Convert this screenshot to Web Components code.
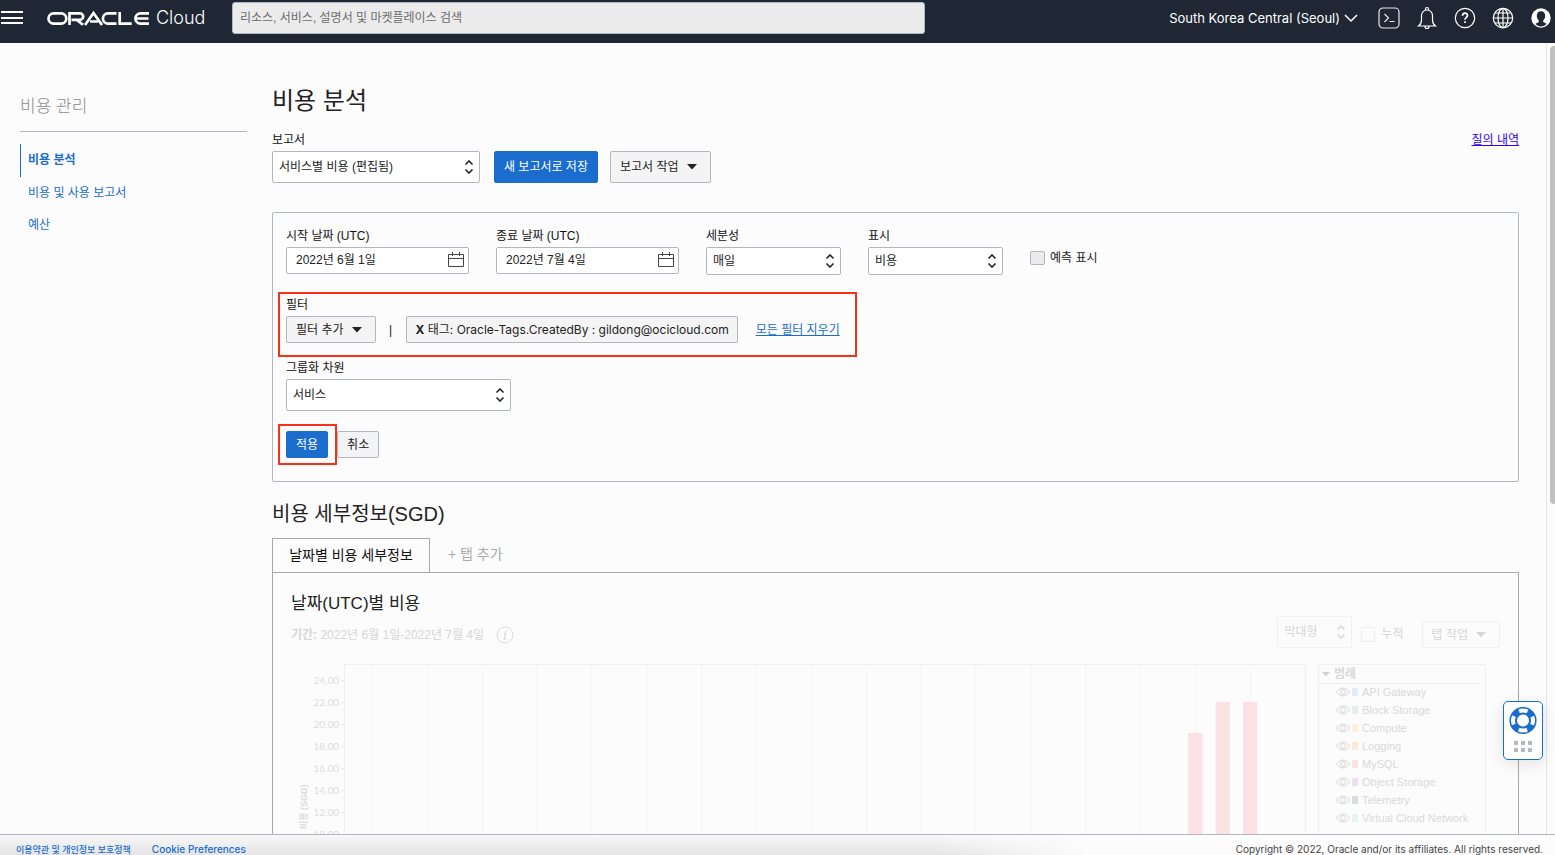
<!DOCTYPE html>
<html lang="ko">
<head>
<meta charset="utf-8">
<title>비용 분석 - Oracle Cloud</title>
<style>
html,body{margin:0;height:100%}
body{font-family:"Liberation Sans","Noto Sans CJK KR",sans-serif;font-size:12px;line-height:16px;color:#222;background:#fcfcfc;overflow:hidden}
</style>
</head>
<body>
<cost-app></cost-app>
<script>
const base = `*{box-sizing:border-box}button,input,select{font:inherit;color:inherit;margin:0}a{color:#1a6dcc;text-decoration:none}h1,h2,h3,p,ul{margin:0;padding:0;font-weight:400}ul{list-style:none}svg{display:block}`;
function define(name, html) {
  const t = document.createElement('template');
  customElements.define(name, class extends HTMLElement {
    constructor() {
      super();
      t.innerHTML = typeof html === 'function' ? html(this) : html;
      const root = this.attachShadow({ mode: 'open' });
      root.append(t.content.cloneNode(true));
      const s = document.createElement('style');
      s.textContent = base;
      root.prepend(s);
    }
  });
}

define('top-bar', `
<style>
:host{display:flex;align-items:flex-start;height:43px;flex:none;background:#1e2733;color:#fff}
.menu{border:0;background:none;padding:0;width:24px;height:36px}
.logo{display:flex;align-items:center;gap:6px;height:36px;margin-left:23px;color:#fff;font:300 18px/24px Inter,sans-serif;width:160px}
.search{margin:2px 0 0 25px;width:693px;height:32px;border:1px solid #b0b7c0;border-radius:3px;background:#ebebeb;padding:0 7px;color:#222;flex:0 1 693px}
.search::placeholder{color:#6b6b6b;opacity:1}
nav{margin-left:auto;display:flex;align-items:center;height:36px}
.region{display:flex;align-items:center;gap:4px;border:0;background:none;color:#fff;font:13px/16px Inter,sans-serif;padding:0;margin-right:19px;white-space:nowrap}
.icons{display:flex;gap:14px;margin-right:2px}
.icons button{border:0;background:none;padding:0;width:24px;height:24px}
</style>
<button class="menu" aria-label="메뉴"><svg width="24" height="36" stroke="#fff" stroke-width="2"><path d="M1 12h22M1 18h22M1 23h22"/></svg></button>
<a class="logo" href="#"><svg role="img" aria-label="Oracle" width="103" height="17" viewBox="0 0 103 17" fill="none" stroke="#fff" stroke-width="2.700">
<path d="M6.600 3.400h7.600a5.100 5.100 0 0 1 0 10.200H6.600a5.100 5.100 0 0 1 0-10.200z"/>
<path d="M22.500 15V3.400h10.500a3.200 3.200 0 0 1 0 6.400H24.500M29.500 9.800l6.500 5"/>
<path d="M38 15l8.500-12 8.500 12M43 11.500h8"/>
<path d="M69.500 3.400H61a5.100 5.100 0 0 0 0 10.200h8.500"/>
<path d="M72.700 2v11.600h12"/>
<path d="M102 3.400h-8.500a5.100 5.100 0 0 0 0 10.200h8.500M89 8.500h12.500"/></svg>Cloud</a>
<input class="search" type="search" aria-label="검색" placeholder="리소스, 서비스, 설명서 및 마켓플레이스 검색">
<nav>
<button class="region">South Korea Central (Seoul)<svg width="14" height="10" fill="none" stroke="#fff" stroke-width="1.500"><path d="M1 2l6 6 6-6"/></svg></button>
<div class="icons">
<button aria-label="Cloud Shell"><svg width="24" height="24" fill="none" stroke="#e8e8e8" stroke-width="1.200"><rect x="2" y="2" width="20" height="20" rx="4"/><path d="M7.500 8l4 4-4 4M12.500 15.500h5"/></svg></button>
<button aria-label="알림"><svg width="24" height="24" fill="none" stroke="#fff" stroke-width="1.200"><path d="M3.500 20c2-1.500 3-3 3-6V9.500a5.500 5.500 0 0 1 11 0V14c0 3 1 4.500 3 6zM10.500 4V3a1.500 1.500 0 0 1 3 0v1M10 20.500a2 2 0 0 0 4 0"/></svg></button>
<button aria-label="도움말"><svg width="24" height="24" fill="none" stroke="#fff" stroke-width="1.200"><circle cx="12" cy="12" r="9.700"/><path stroke-width="1.700" d="M9.500 9.800c0-3.400 5-3.400 5-.4 0 2-2.500 2-2.500 4.300M12 15.200v1.700"/></svg></button>
<button aria-label="언어"><svg width="24" height="24" fill="none" stroke="#fff" stroke-width="1.200"><circle cx="12" cy="12" r="9.700"/><ellipse cx="12" cy="12" rx="5" ry="9.700"/><path d="M12 2v20M2.300 12h19.400M4 7h16M4 17h16"/></svg></button>
<button aria-label="프로필"><svg width="24" height="24"><circle cx="12" cy="12" r="9.700" fill="#fff"/><path fill="#1e2733" d="M12 5.200c-2.800 0-4.200 2-4.200 4.500 0 2 .8 3.700 2 4.700v1.500l-3.300 1.800c2.500 3.700 8.500 3.700 11 0l-3.300-1.800v-1.500c1.200-1 2-2.700 2-4.700 0-2.500-1.400-4.500-4.200-4.500z"/></svg></button>
</div></nav>`);

define('side-nav', `
<style>
:host{display:block;width:227px;flex:none;padding-top:52px}
h2{font-size:17px;line-height:24px;color:#8a8a8a;font-weight:300;padding-bottom:12px;border-bottom:1px solid #b0b7c0;margin-bottom:12px}
a{display:block;line-height:32px;padding-left:8px}
a.on{font-weight:700;border-left:1px solid #1a6dcc;padding-left:7px;line-height:33px}
</style>
<h2>비용 관리</h2>
<ul><li><a class="on" href="#">비용 분석</a></li><li><a href="#">비용 및 사용 보고서</a></li><li><a href="#">예산</a></li></ul>`);

/* Labelled drop-down; width and height come from --w and --h. */
define('select-field', el => `
<style>
:host{display:flex;flex-direction:column;gap:var(--gap,3px)}
label{color:#111}
label.sr{display:none}
.box{display:grid;width:var(--w);height:var(--h,28px)}
.box>*{grid-area:1/1}
select{appearance:none;width:100%;border:1px solid var(--line,#b0b7c0);border-radius:2px;background:var(--fill,#fff);padding:0 6px}
svg{justify-self:end;align-self:center;margin-right:6px;pointer-events:none}
</style>
<label for="s" class="${el.hasAttribute('quiet') ? 'sr' : ''}">${el.getAttribute('label')}</label>
<div class="box"><select id="s" aria-label="${el.getAttribute('label')}"><option>${el.getAttribute('value')}</option></select>
<svg width="10" height="14" fill="none" stroke="currentColor" stroke-width="1.600"><path d="M1.500 4.500L5 1l3.500 3.500M1.500 9.500L5 13l3.500-3.500"/></svg></div>`);

define('date-field', el => `
<style>
:host{display:flex;flex-direction:column;gap:3px}
label{color:#111}
.box{display:grid;width:183px;height:27px}
.box>*{grid-area:1/1}
input{width:100%;border:1px solid #b0b7c0;border-radius:2px;background:#fff;padding:0 9px 2px}
svg{justify-self:end;margin:5px 5px 0 0;pointer-events:none}
</style>
<label for="d">${el.getAttribute('label')}</label>
<div class="box"><input id="d" type="text" value="${el.getAttribute('value')}">
<svg width="16" height="16" fill="none" stroke="#444"><path d="M.5 2.500h15v12H.5zM.5 6.500h15M4.500 0v4M11.500 0v4"/></svg></div>`);

define('action-button', el => `
<style>
:host{display:block}
button{display:flex;align-items:center;gap:8px;height:var(--h,27px);padding:0 9px;border:1px solid var(--line,#b0b7c0);border-radius:2px;background:var(--fill,#f4f4f4);white-space:nowrap}
:host([menu]) button{padding-right:13px}
:host([primary]) button{background:#1a6dcc;border-color:#1a6dcc;color:#fff}
</style>
<button type="button"><span><slot></slot></span>${el.hasAttribute('menu') ? '<svg width="10" height="6" fill="currentColor"><path d="M0 0h10L5 5.500z"/></svg>' : ''}</button>`);

define('report-bar', `
<style>
:host{display:flex;justify-content:space-between;align-items:flex-start}
.row{display:flex;align-items:flex-end}
select-field{--w:208px;--h:32px;margin-right:14px}
action-button{--h:32px;margin-right:12px}
a{color:#30e;text-decoration:underline}
</style>
<div class="row"><select-field label="보고서" value="서비스별 비용 (편집됨)"></select-field>
<action-button primary>새 보고서로 저장</action-button><action-button menu>보고서 작업</action-button></div>
<a href="#">질의 내역</a>`);

define('filter-panel', `
<style>
:host{display:block;margin-top:29px;border:1px solid #b0b7c0;border-radius:2px;padding:15px 13px 16px}
.fields{display:flex;gap:27px;height:48px}
select-field{--w:135px}
.check{display:flex;align-items:center;gap:5px;height:16px;margin-top:22px}
.check input{appearance:none;width:15px;height:14px;border:1px solid #b0b7c0;border-radius:2px;background:#ebebeb}
.mark{border:2px solid #f7301a;width:fit-content;margin-left:-8px}
.filters{margin-top:16px;padding:3px 15px 12px 6px}
.filters p{margin-bottom:3px;color:#111}
.row{display:flex;align-items:center}
.sep{width:30px;text-align:center}
.tag{height:27px;border:1px solid #b0b7c0;border-radius:2px;background:#f4f4f4;padding:0 8px 0 9px;font-family:Inter,"Noto Sans CJK KR",sans-serif;white-space:nowrap}
.clear{margin-left:18px;text-decoration:underline}
.group{--w:225px;--h:32px;margin-top:3px}
.actions{display:flex;align-items:center;margin-top:13px}
.apply{padding:5px 7px 5px 6px}
</style>
<div class="fields"><date-field label="시작 날짜 (UTC)" value="2022년 6월 1일"></date-field><date-field label="종료 날짜 (UTC)" value="2022년 7월 4일"></date-field>
<select-field label="세분성" value="매일"></select-field><select-field label="표시" value="비용"></select-field>
<label class="check"><input type="checkbox">예측 표시</label></div>
<div class="mark filters"><p>필터</p><div class="row"><action-button menu>필터 추가</action-button><span class="sep">|</span>
<button class="tag"><b>X</b> 태그: Oracle-Tags.CreatedBy : gildong@ocicloud.com</button><a class="clear" href="#">모든 필터 지우기</a></div></div>
<select-field class="group" label="그룹화 차원" value="서비스"></select-field>
<div class="actions"><div class="mark apply"><action-button primary>적용</action-button></div><action-button>취소</action-button></div>`);

const slots = 35;
const lines = Array.from({ length: 17 }, (_, i) => { const x = (2 * i + 1) / slots * 100 + '%'; return `<line x1="${x}" x2="${x}" y1="0" y2="100%" stroke="#f5f5f5"/>`; }).join('');
const bars = [[31, 68], [32, 37], [33, 37]].map(([k, y]) => `<rect x="${(k - .26) / slots * 100}%" y="${y}" width="${.52 / slots * 100}%" height="400" fill="#fbe1e4"/>`).join('');
define('cost-chart', `
<style>
:host{display:flex;flex:1;min-width:0;height:400px;font-size:10px;color:#dcdcdc}
.title{writing-mode:vertical-rl;text-orientation:sideways;transform:rotate(180deg);font-size:9px;font-weight:700;height:46px;margin-top:119px;line-height:12px;width:12px;white-space:nowrap}
ol{list-style:none;margin:5px 0 0;padding:0;width:34px;font-family:Lato,sans-serif;line-height:22px;text-align:right}
li{display:flex;align-items:center;justify-content:flex-end;gap:2px}
li::after{content:"";width:3px;height:1px;background:#ececec}
.plot{flex:1;border:1px solid #f0f0f0}
</style>
<div class="title">비용 (SGD)</div>
<ol>${['24.00','22.00','20.00','18.00','16.00','14.00','12.00','10.00'].map(v => `<li>${v}</li>`).join('')}</ol>
<div class="plot"><svg width="100%" height="398">${lines}${bars}</svg></div>`);

const items = [['API Gateway','#e0ecf6'],['Block Storage','#e2f0e6'],['Compute','#fcf2dc'],['Logging','#fcebdd'],['MySQL','#fbe1e4'],['Object Storage','#eedff5'],['Telemetry','#d9dce1'],['Virtual Cloud Network','#e8f3ec']];
define('chart-legend', `
<style>
:host{display:block;width:168px;flex:none;border:1px solid #f0f0f0;color:#d9d9d9}
h4{display:flex;align-items:center;gap:4px;margin:0 6px 0 0;height:19px;border-bottom:1px solid #ececec;padding-left:3px;font-size:12px}
li{display:flex;align-items:center;height:18px;padding:0 0 2px 17px;font-size:11px}
i{width:6px;height:8px;margin:0 4px 0 2px}
</style>
<h4><svg width="8" height="5" fill="#d0d0d0"><path d="M0 0h8L4 4.500z"/></svg>범례</h4>
<ul>${items.map(([n, c]) => `<li><svg width="14" height="10" fill="none" stroke="#d6d6d6"><path d="M.5 5C4-.3 10-.3 13.500 5 10 10.300 4 10.300.5 5z"/><circle cx="7" cy="5" r="2.500"/></svg><i style="background:${c}"></i>${n}</li>`).join('')}</ul>`);

define('cost-details', `
<style>
:host{display:block;margin-top:18px}
h2{font-size:20px;line-height:28px}
.tabs{display:flex;margin-top:10px;height:34px}
.tabs button{border:0;background:none;font-size:14px;padding:0 0 2px}
.tabs .on{border:1px solid #a9a9a9;border-bottom:0;width:158px;color:#111}
.tabs .add{color:#aaa;margin-left:18px;padding-bottom:3px}
.panel{border:1px solid #a9a9a9;padding:19px 18px 0}
h3{font-size:17px;line-height:24px}
.meta{display:flex;align-items:flex-start;height:48px;color:#d6d6d6}
.meta p{flex:1;display:flex;align-items:center;gap:12px;height:18px;margin-top:10px}
select-field{--w:75px;--h:32px;--line:#f0f0f0;--fill:#fcfcfc;--gap:0px}
.cum{display:flex;align-items:center;gap:6px;margin:10px 18px 0 9px}
.cum input{appearance:none;width:14px;height:15px;border:1px solid #eee;border-radius:2px}
action-button{--line:#f0f0f0;--fill:#fcfcfc;margin-top:5px}
.chart{display:flex;gap:12px;padding:0 14px 0 7px}
</style>
<h2>비용 세부정보(SGD)</h2>
<div class="tabs"><button class="on">날짜별 비용 세부정보</button><button class="add">+ 탭 추가</button></div>
<div class="panel"><h3>날짜(UTC)별 비용</h3>
<div class="meta"><p><span><b>기간:</b> 2022년 6월 1일-2022년 7월 4일</span><svg width="18" height="18" fill="none" stroke="#dcdcdc"><circle cx="9" cy="9" r="8"/><path stroke-width="1.300" d="M8 7.500h1.800l-1.500 5.500h1.800M9.800 4.300l-.3 1.300"/></svg></p>
<select-field quiet label="차트 유형" value="막대형"></select-field><label class="cum"><input type="checkbox">누적</label><action-button menu>탭 작업</action-button></div>
<div class="chart"><cost-chart></cost-chart><chart-legend></chart-legend></div></div>`);

define('help-widget', `
<style>
:host{position:absolute;right:12px;bottom:95px}
button{display:block;width:40px;height:59px;border:1px solid #1a6dcc;border-radius:5px;background:#fff;padding:0 0 0 5px;box-shadow:0 4px 16px rgba(0,0,0,.1)}
</style>
<button aria-label="지원"><svg width="28" height="48" viewBox="0 0 28 48"><circle cx="14" cy="13.500" r="9.800" fill="none" stroke="#1a6dcc" stroke-width="7.600"/><circle cx="14" cy="13.500" r="10" fill="none" stroke="#fff" stroke-width="4" stroke-dasharray="8.700 7.008" stroke-dashoffset="4.350"/><path fill="#b5b8bf" d="M5 34h4v4H5zM12 34h4v4h-4zM19 34h4v4h-4zM5 41h4v4H5zM12 41h4v4h-4zM19 41h4v4h-4z"/></svg></button>`);

define('page-footer', `
<style>
:host{display:flex;flex:none;height:21px;border-top:1px solid #b0b7c0;padding:9px 12px 0 16px;font:10px/11px Inter,"Noto Sans CJK KR",sans-serif;background:linear-gradient(90deg,transparent 60%,#fcfcfc 70%),linear-gradient(#f8f8f8,#e4e4e4)}
a{margin-right:21px;font-weight:500}
.cjk{font-size:9px}
span{margin-left:auto;color:#444}
</style>
<a class="cjk" href="#">이용약관 및 개인정보 보호정책</a><a href="#">Cookie Preferences</a><span>Copyright © 2022, Oracle and/or its affiliates. All rights reserved.</span>`);

define('cost-app', `
<style>
:host{display:flex;flex-direction:column;height:100vh;position:relative}
main{flex:1;min-height:0;display:flex;overflow:hidden}
.page{flex:1;min-width:0;display:flex;gap:25px;padding:0 27px 0 20px}
.content{flex:1;min-width:0;padding-top:42px}
h1{font-size:24px;line-height:32px;margin-bottom:15px}
.scroll{width:9px;border-left:1px solid #e4e4e4;padding:3px 0 0 3px}
.thumb{height:458px;background:#c1c1c1;border-radius:4px 0 0 4px}
</style>
<top-bar></top-bar>
<main><div class="page"><side-nav></side-nav><div class="content"><h1>비용 분석</h1><report-bar></report-bar><filter-panel></filter-panel><cost-details></cost-details></div></div>
<div class="scroll"><div class="thumb"></div></div></main>
<page-footer></page-footer><help-widget></help-widget>`);
</script>
</body>
</html>
